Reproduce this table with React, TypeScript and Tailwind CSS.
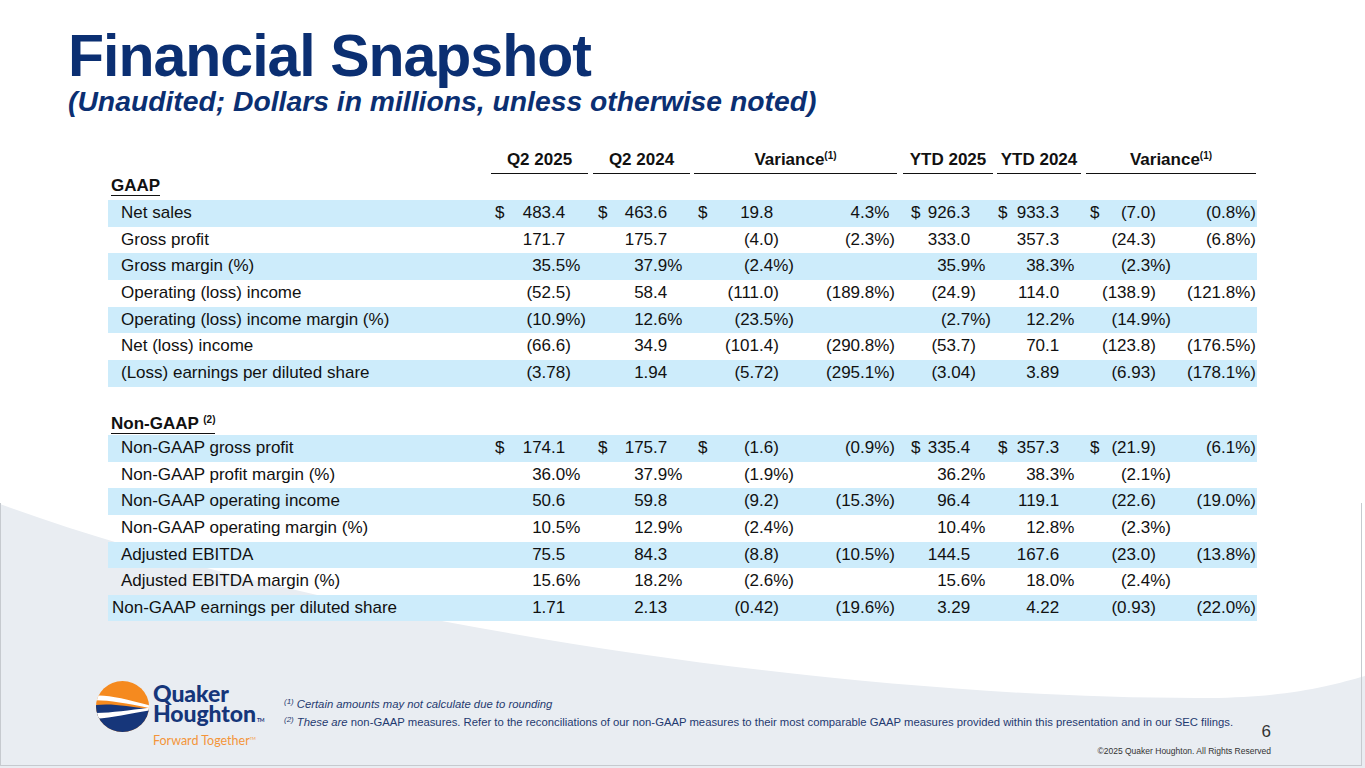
import React from 'react';

type Row = { label: string; vals: string[]; dollar?: boolean; indent?: boolean };

const GAAP: Row[] = [
  { label: 'Net sales', dollar: true, vals: ['483.4', '463.6', '19.8', '4.3%', '926.3', '933.3', '(7.0)', '(0.8%)'] },
  { label: 'Gross profit', vals: ['171.7', '175.7', '(4.0)', '(2.3%)', '333.0', '357.3', '(24.3)', '(6.8%)'] },
  { label: 'Gross margin (%)', vals: ['35.5%', '37.9%', '(2.4%)', '', '35.9%', '38.3%', '(2.3%)', ''] },
  { label: 'Operating (loss) income', vals: ['(52.5)', '58.4', '(111.0)', '(189.8%)', '(24.9)', '114.0', '(138.9)', '(121.8%)'] },
  { label: 'Operating (loss) income margin (%)', vals: ['(10.9%)', '12.6%', '(23.5%)', '', '(2.7%)', '12.2%', '(14.9%)', ''] },
  { label: 'Net (loss) income', vals: ['(66.6)', '34.9', '(101.4)', '(290.8%)', '(53.7)', '70.1', '(123.8)', '(176.5%)'] },
  { label: '(Loss) earnings per diluted share', vals: ['(3.78)', '1.94', '(5.72)', '(295.1%)', '(3.04)', '3.89', '(6.93)', '(178.1%)'] },
];

const NONGAAP: Row[] = [
  { label: 'Non-GAAP gross profit', dollar: true, vals: ['174.1', '175.7', '(1.6)', '(0.9%)', '335.4', '357.3', '(21.9)', '(6.1%)'] },
  { label: 'Non-GAAP profit margin (%)', vals: ['36.0%', '37.9%', '(1.9%)', '', '36.2%', '38.3%', '(2.1%)', ''] },
  { label: 'Non-GAAP operating income', vals: ['50.6', '59.8', '(9.2)', '(15.3%)', '96.4', '119.1', '(22.6)', '(19.0%)'] },
  { label: 'Non-GAAP operating margin (%)', vals: ['10.5%', '12.9%', '(2.4%)', '', '10.4%', '12.8%', '(2.3%)', ''] },
  { label: 'Adjusted EBITDA', vals: ['75.5', '84.3', '(8.8)', '(10.5%)', '144.5', '167.6', '(23.0)', '(13.8%)'] },
  { label: 'Adjusted EBITDA margin (%)', vals: ['15.6%', '18.2%', '(2.6%)', '', '15.6%', '18.0%', '(2.4%)', ''] },
  { label: 'Non-GAAP earnings per diluted share', indent: false, vals: ['1.71', '2.13', '(0.42)', '(19.6%)', '3.29', '4.22', '(0.93)', '(22.0%)'] },
];

const DL = ['pl-[4px]', 'pl-[8px]', 'pl-[6px]', '', 'pl-[11px]', 'pl-[3px]', 'pl-[7px]', ''];
const PR = ['pr-[4px]', 'pr-[4px]', 'pr-[1px]', 'pr-[5px]', 'pr-[4px]', 'pr-[3px]', 'pr-[1px]', 'pr-[1px]'];
const DOLLAR_COLS = [0, 1, 2, 4, 5, 6];

const GRID = 'grid grid-cols-[383px_99px_102px_103px_105px_95px_88px_89px_85px]';

function Cell({ v, i, dollar }: { v: string; i: number; dollar?: boolean }) {
  const hasPct = v.includes('%');
  const hasParen = v.endsWith(')');
  const pad = v ? (hasPct ? '' : '%') + (hasParen ? '' : ')') : '';
  return (
    <div className={`flex items-center ${DL[i]} ${PR[i]}`}>
      {dollar && DOLLAR_COLS.includes(i) ? <span>$</span> : null}
      <span className="ml-auto whitespace-pre">
        {v}
        <span className="invisible">{pad}</span>
      </span>
    </div>
  );
}

function DataRow({ row, band }: { row: Row; band: boolean }) {
  const indent = row.indent !== false;
  return (
    <div className={`${GRID} h-[26.67px] leading-[26.67px] ${band ? 'bg-[#cdecfb]' : ''}`}>
      <div className={`${indent ? 'pl-[13px]' : 'pl-[4px]'} whitespace-nowrap`}>{row.label}</div>
      {row.vals.map((v, i) => (
        <Cell key={i} v={v} i={i} dollar={row.dollar} />
      ))}
    </div>
  );
}

function Sup({ children }: { children: React.ReactNode }) {
  return <span className="relative -top-[6px] text-[10px] leading-none">{children}</span>;
}

function Logo() {
  return (
    <div className="flex items-start">
      <svg width="53" height="51" viewBox="0 0 100 100" preserveAspectRatio="none" className="shrink-0">
        <defs>
          <clipPath id="qhc">
            <circle cx="50" cy="50" r="50" />
          </clipPath>
        </defs>
        <g clipPath="url(#qhc)">
          <rect x="0" y="0" width="100" height="100" fill="#f58a1f" />
          <path d="M-5,29 C22,26 58,36 105,49 L105,54 C58,44 22,37 -5,38 Z" fill="#ffffff" />
          <path d="M-5,48 C25,42 62,50 105,55 L105,105 L-5,105 Z" fill="#16367a" />
          <path d="M-5,63 C30,63 62,57 105,52 L105,57 C62,63 30,73 -5,74 Z" fill="#ffffff" />
        </g>
      </svg>
      <div className="ml-[4px] font-['Lato',sans-serif]">
        <div className="mt-[2px] text-[23px] font-black leading-[20px] text-[#16367a] tracking-[-0.1px] whitespace-nowrap">
          Quaker
          <br />
          Houghton<span className="ml-[1px] text-[5px] font-bold">TM</span>
        </div>
        <div className="mt-[4px] text-[12.5px] leading-[14px] text-[#f4953a] whitespace-nowrap">
          Forward Together<span className="relative -top-[5px] text-[4px]">TM</span>
        </div>
      </div>
    </div>
  );
}

export default function App() {
  return (
    <div className="relative w-[1365px] h-[768px] overflow-hidden bg-white font-['Liberation_Sans',Arial,sans-serif] text-[#111]">
      <svg className="absolute inset-0" width="1365" height="768" viewBox="0 0 1365 768">
        <path d="M0,504 C330,625 850,700 1210,698 C1290,697 1330,686 1365,676 L1365,768 L0,768 Z" fill="#e9edf2" />
        <line x1="0.5" y1="503" x2="0.5" y2="766" stroke="#c6cacf" strokeWidth="1" />
        <line x1="1361.5" y1="503" x2="1361.5" y2="766" stroke="#c6cacf" strokeWidth="1" />
        <line x1="0" y1="765.5" x2="1362" y2="765.5" stroke="#c6cacf" strokeWidth="1" />
      </svg>

      <div className="relative flex flex-col">
        {/* Title */}
        <div className="pl-[68px] pt-[27px]">
          <h1 className="text-[59px] leading-[59px] font-bold tracking-[-1px] text-[#0b2f72]">Financial Snapshot</h1>
          <div className="mt-[1px] text-[28.3px] leading-[28px] font-bold italic text-[#0b2f72] whitespace-nowrap">
            (Unaudited; Dollars in millions, unless otherwise noted)
          </div>
        </div>

        {/* Table */}
        <div className="mt-[32px] ml-[108px] w-[1149px] text-[17px]">
          <div className={`${GRID} font-bold`}>
            <div />
            <div className="col-span-1 mr-[2px] h-[26.5px] leading-[25px] text-center border-b-[1.5px] border-[#111]">Q2 2025</div>
            <div className="col-span-1 ml-[3px] mr-[2px] h-[26.5px] leading-[25px] text-center border-b-[1.5px] border-[#111]">Q2 2024</div>
            <div className="col-span-2 ml-[2px] mr-[3px] h-[26.5px] leading-[25px] text-center border-b-[1.5px] border-[#111]">
              Variance<Sup>(1)</Sup>
            </div>
            <div className="col-span-1 ml-[3px] mr-[2px] h-[26.5px] leading-[25px] text-center border-b-[1.5px] border-[#111] whitespace-nowrap">YTD 2025</div>
            <div className="col-span-1 ml-[2px] mr-[2px] h-[26.5px] leading-[25px] text-center border-b-[1.5px] border-[#111] whitespace-nowrap">YTD 2024</div>
            <div className="col-span-2 ml-[3px] mr-[1px] h-[26.5px] leading-[25px] text-center border-b-[1.5px] border-[#111]">
              Variance<Sup>(1)</Sup>
            </div>
          </div>

          <div className="h-[26.5px] flex items-center pl-[3px]">
            <span className="inline-block font-bold leading-[18px] border-b-[1.5px] border-[#111]">GAAP</span>
          </div>
          {GAAP.map((r, i) => (
            <DataRow key={r.label} row={r} band={i % 2 === 0} />
          ))}

          <div className="h-[27.3px]" />
          <div className="h-[21px] flex items-center pl-[3px]">
            <span className="inline-block font-bold leading-[18px] border-b-[1.5px] border-[#111] whitespace-nowrap">
              Non-GAAP <Sup>(2)</Sup>
            </span>
          </div>
          {NONGAAP.map((r, i) => (
            <DataRow key={r.label} row={r} band={i % 2 === 0} />
          ))}
        </div>

        {/* Footer */}
        <div className="mt-[60px] flex pl-[96px]">
          <div className="w-[188px] shrink-0">
            <Logo />
          </div>
          <div className="mt-[15px] flex-1 min-w-0 text-[11.3px] leading-[16px] text-[#1f3a70] whitespace-nowrap">
            <div>
              <span className="relative -top-[4px] text-[8px] italic">(1)</span>
              <span className="italic ml-[3px]">Certain amounts may not calculate due to rounding</span>
            </div>
            <div>
              <span className="relative -top-[4px] text-[8px] italic">(2)</span>
              <span className="italic ml-[3px]">These are</span> non-GAAP measures. Refer to the reconciliations of our non-GAAP measures to their most comparable GAAP measures provided within this presentation and in our SEC filings.
            </div>
          </div>
          <div className="shrink-0 pr-[94px] flex flex-col items-end text-[#333]">
            <div className="mt-[41px] text-[17px] leading-[20px]">6</div>
            <div className="mt-[3px] text-[8.5px] leading-[12px] whitespace-nowrap">©2025 Quaker Houghton. All Rights Reserved</div>
          </div>
        </div>
      </div>
    </div>
  );
}
